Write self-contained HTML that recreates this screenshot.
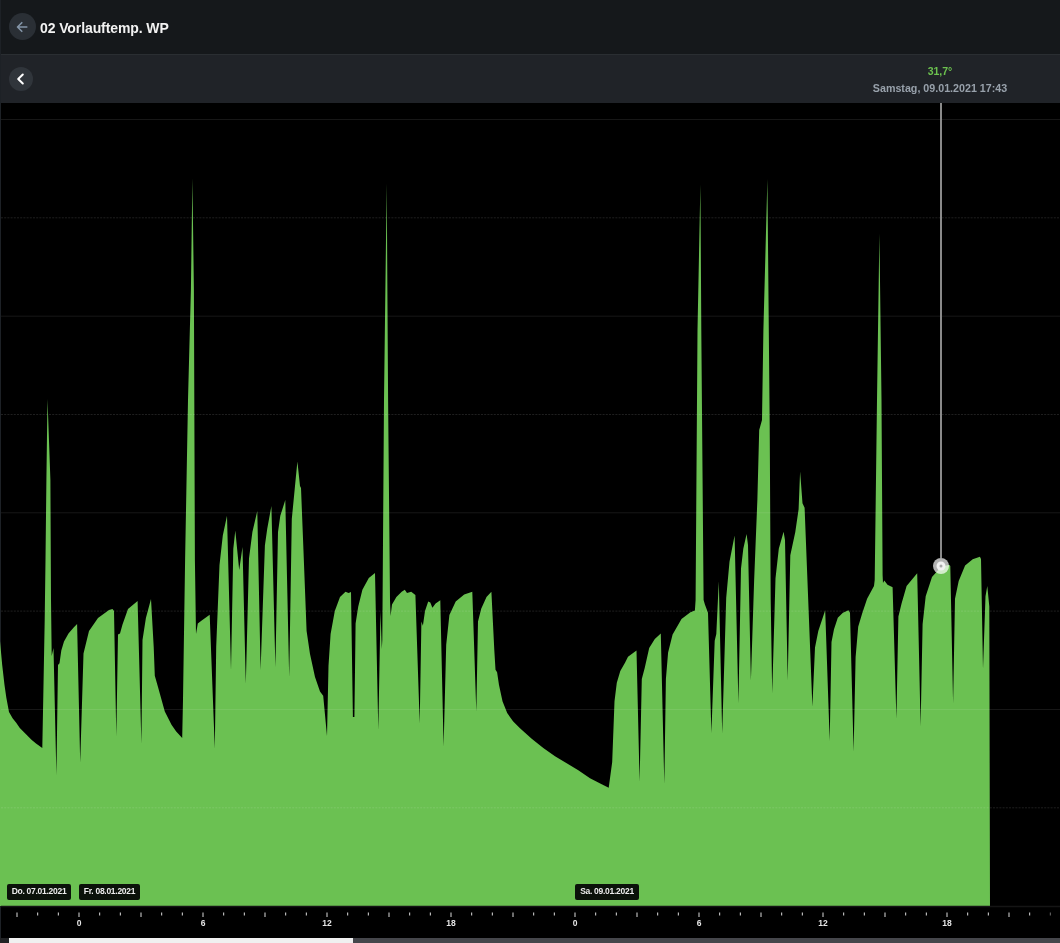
<!DOCTYPE html>
<html><head><meta charset="utf-8"><style>
html,body{margin:0;padding:0;width:1060px;height:943px;overflow:hidden;background:#000;font-family:"Liberation Sans",sans-serif;}
.abs{position:absolute;}
#title,#val,#date,.dl,svg text{will-change:transform;}
#hdr{left:0;top:0;width:1060px;height:54px;background:#15181b;}
#bar{left:0;top:54px;width:1060px;height:48px;background:#202328;border-top:1px solid #2a2e32;}
#lb{left:0;top:0;width:1px;height:943px;background:#1d2126;}
#back{left:9px;top:13px;width:27px;height:27px;border-radius:50%;background:#2a2f35;}
#title{left:40px;top:20px;font-size:14px;font-weight:bold;color:#f2f2f2;white-space:nowrap;letter-spacing:-0.1px;}
#prev{left:9px;top:67px;width:24px;height:24px;border-radius:50%;background:#30353b;}
#val{left:840px;top:64.5px;width:200px;text-align:center;font-size:10.5px;font-weight:bold;color:#6cc24f;}
#date{left:840px;top:82.3px;width:200px;text-align:center;font-size:10.7px;font-weight:bold;color:#98a1ab;}
.dl{top:884px;height:15.5px;background:#0b120a;border-radius:2px;color:#ececec;font-size:8.5px;font-weight:bold;line-height:15.5px;letter-spacing:-0.28px;text-align:center;white-space:nowrap;}
#sbt{left:0;top:938px;width:1060px;height:5px;background:#45464b;}
#sbl{left:0;top:938px;width:9px;height:5px;background:#222325;}
#sbh{left:9px;top:938px;width:344px;height:5px;background:#f0f0f0;}
</style></head><body>
<div id="hdr" class="abs"></div>
<div id="bar" class="abs"></div>
<div id="lb" class="abs"></div>
<svg class="abs" style="left:0;top:0" width="1060" height="943" viewBox="0 0 1060 943">
<rect x="1" y="103" width="1059" height="835" fill="#000"/>
<path d="M0 641 L2.2 665 L4.5 685 L6.3 697.5 L9 712 L12.6 718.2 L16.2 722.7 L19.8 728 L27 735.3 L31.5 739.8 L36 743.4 L42.3 748 L43.2 701 L44.7 620 L45.5 560 L46.4 480 L47.5 399 L50.4 480 L51 600 L51.7 656 L53.5 648 L56.4 775 L58 665 L59.5 663.2 L61.3 650.6 L64 641.6 L68.5 633.5 L73.9 627.2 L77.1 624 L80.2 762.6 L83.5 653.5 L89 631 L98 618 L109 610 L112.5 609 L114 611 L116.3 736 L118 634.6 L120 633.5 L122.5 624.5 L128 609 L137.6 601 L141.4 743.7 L142.5 640 L145.9 618 L151 599 L153.7 646.8 L154.8 675.8 L158 687 L164.8 711.4 L171.5 724.8 L176.2 731.6 L182.2 738 L183 700 L185.1 560 L188 400 L190.9 290 L192.4 178.3 L193.9 290 L194.9 560 L196 634 L197.8 623.6 L201.7 620.4 L209.7 614.7 L214.8 748.6 L216.2 647 L219.5 565 L222.8 535.5 L227 515.8 L231 670 L233.3 548.7 L235.3 530.6 L239.2 570 L242.5 547 L245.8 683.6 L249 558.6 L252.4 532 L257.3 510.9 L260.6 670 L264.9 545.4 L267.2 529 L271.4 506 L275.4 667 L278 532 L280.3 515.8 L285.3 500 L289.2 677 L291.8 519 L295 486 L297.4 461.5 L300 486 L301 488 L303.4 548.7 L306.6 631 L310 654 L315 677 L320 691.5 L323.2 695.7 L327 736 L328.5 666 L330.6 634 L334.8 611 L340 597 L345.5 591.8 L348.6 592.9 L351 592 L352.9 717 L354.4 717 L355.6 623.6 L358.2 606.7 L362.4 589.7 L368.8 578 L375 573 L378.3 729.7 L380.5 611 L381.8 649 L382.3 640 L384 400 L386.7 183.4 L388.1 400 L390 600 L390.6 616 L392 604.5 L396.4 597 L401.7 591.8 L404.8 589.7 L407 593 L411.2 591.8 L415.4 595 L419.7 723.3 L421.4 621.5 L422.9 625.7 L425 611 L428.2 601.4 L430.3 602.4 L432.4 607.7 L435.6 603.5 L440.3 600.3 L443.6 746.6 L446.2 644.8 L449.4 615 L455.7 601.4 L464.2 594.4 L472.3 591.8 L476.3 711.6 L478 621.5 L481.2 608.8 L486.5 597 L491.4 591.8 L494.3 650 L495.5 669.8 L497.1 672.2 L499 685 L502.5 701.3 L507.2 713 L513 721.2 L520 728.2 L531.7 738.7 L543.3 748 L555 756.2 L566.7 763.2 L578.3 770.2 L590 778.3 L601.7 784.2 L608.7 787.7 L612.2 762 L613.8 720 L614.5 701.3 L616.8 682.7 L620.3 671 L625 662.8 L628 656.8 L636.5 650.6 L639.6 781.5 L641.8 679 L644.7 668 L649.2 648 L654.8 639 L660.8 633.4 L664.3 783.8 L665.9 679 L668.1 652.4 L672.6 634.5 L681.5 619 L690.4 612.3 L694.9 610.5 L695.6 600 L697.5 330 L700.4 184.6 L701.3 330 L703.6 600 L704.9 604.5 L708 612.8 L711.4 733 L714.7 640.8 L716.3 634 L718.8 581.3 L722.2 733 L726.2 598 L729.5 561.8 L734.6 535.5 L738.4 703.3 L741 568.4 L743.3 548.7 L746.6 534 L748 545 L750.9 680.3 L754.1 581.6 L757.4 499 L759.2 430 L762 420 L763.4 330 L767.4 179 L768.8 330 L769.7 425 L770.7 600 L772.2 693.4 L775.5 578.3 L778.8 548.7 L783.6 531.8 L785 540 L787.7 680.3 L790.3 555.3 L795.3 532 L798.6 509.2 L800.1 471.4 L802.5 503.3 L804.6 507.8 L812.4 706.6 L815 647.4 L818.3 631 L825.2 610.2 L829.7 741 L831.5 642 L834 629.3 L837.8 617.8 L842.9 612.7 L848.5 610.2 L850 612.7 L853.6 751.5 L855.6 657.3 L858.2 626.7 L862 614 L867.1 598.7 L874 586 L874.7 580 L877 400 L879.4 233.4 L881.5 400 L882.6 575 L883 583 L884.3 580.5 L887.5 584.7 L892.6 587.3 L896.4 718.4 L898.4 616.6 L901.5 603.8 L906.6 586 L917.2 573.3 L920.6 726 L922.6 624.2 L925.7 596.2 L932 577 L940.9 567 L949.3 564.8 L950.3 566 L953.1 703.1 L955 598.7 L958.7 581 L965.1 565.6 L972.7 559.3 L979.9 556.7 L981 559 L983 668.7 L985.5 596.2 L987.3 586 L989.3 606.4 L990 906 L0 906 Z" fill="#6bc152"/>
<line x1="1" y1="119.5" x2="1060" y2="119.5" stroke="rgba(255,255,255,0.09)" stroke-width="1"/><line x1="1" y1="217.8" x2="1060" y2="217.8" stroke="rgba(255,255,255,0.12)" stroke-width="1" stroke-dasharray="2 1.2"/><line x1="1" y1="316.2" x2="1060" y2="316.2" stroke="rgba(255,255,255,0.09)" stroke-width="1"/><line x1="1" y1="414.5" x2="1060" y2="414.5" stroke="rgba(255,255,255,0.12)" stroke-width="1" stroke-dasharray="2 1.2"/><line x1="1" y1="512.8" x2="1060" y2="512.8" stroke="rgba(255,255,255,0.09)" stroke-width="1"/><line x1="1" y1="611.1" x2="1060" y2="611.1" stroke="rgba(255,255,255,0.12)" stroke-width="1" stroke-dasharray="2 1.2"/><line x1="1" y1="709.5" x2="1060" y2="709.5" stroke="rgba(255,255,255,0.09)" stroke-width="1"/><line x1="1" y1="807.8" x2="1060" y2="807.8" stroke="rgba(255,255,255,0.12)" stroke-width="1" stroke-dasharray="2 1.2"/>
<line x1="1" y1="906.5" x2="1060" y2="906.5" stroke="#151515" stroke-width="1.5"/>
<rect x="16.50" y="912.5" width="1" height="4.5" fill="rgba(220,220,220,1.0)"/><rect x="37.17" y="912.5" width="1" height="3" fill="rgba(220,220,220,1.0)"/><rect x="57.83" y="912.5" width="1" height="3" fill="rgba(220,220,220,1.0)"/><rect x="78.50" y="912.5" width="1" height="4.5" fill="rgba(220,220,220,1.0)"/><rect x="99.17" y="912.5" width="1" height="3" fill="rgba(220,220,220,1.0)"/><rect x="119.83" y="912.5" width="1" height="3" fill="rgba(220,220,220,1.0)"/><rect x="140.50" y="912.5" width="1" height="4.5" fill="rgba(220,220,220,1.0)"/><rect x="161.17" y="912.5" width="1" height="3" fill="rgba(220,220,220,1.0)"/><rect x="181.83" y="912.5" width="1" height="3" fill="rgba(220,220,220,1.0)"/><rect x="202.50" y="912.5" width="1" height="4.5" fill="rgba(220,220,220,1.0)"/><rect x="223.17" y="912.5" width="1" height="3" fill="rgba(220,220,220,1.0)"/><rect x="243.83" y="912.5" width="1" height="3" fill="rgba(220,220,220,1.0)"/><rect x="264.50" y="912.5" width="1" height="4.5" fill="rgba(220,220,220,1.0)"/><rect x="285.17" y="912.5" width="1" height="3" fill="rgba(220,220,220,1.0)"/><rect x="305.83" y="912.5" width="1" height="3" fill="rgba(220,220,220,1.0)"/><rect x="326.50" y="912.5" width="1" height="4.5" fill="rgba(220,220,220,1.0)"/><rect x="347.17" y="912.5" width="1" height="3" fill="rgba(220,220,220,1.0)"/><rect x="367.83" y="912.5" width="1" height="3" fill="rgba(220,220,220,1.0)"/><rect x="388.50" y="912.5" width="1" height="4.5" fill="rgba(220,220,220,1.0)"/><rect x="409.17" y="912.5" width="1" height="3" fill="rgba(220,220,220,1.0)"/><rect x="429.83" y="912.5" width="1" height="3" fill="rgba(220,220,220,1.0)"/><rect x="450.50" y="912.5" width="1" height="4.5" fill="rgba(220,220,220,1.0)"/><rect x="471.17" y="912.5" width="1" height="3" fill="rgba(220,220,220,1.0)"/><rect x="491.83" y="912.5" width="1" height="3" fill="rgba(220,220,220,1.0)"/><rect x="512.50" y="912.5" width="1" height="4.5" fill="rgba(220,220,220,1.0)"/><rect x="533.17" y="912.5" width="1" height="3" fill="rgba(220,220,220,1.0)"/><rect x="553.83" y="912.5" width="1" height="3" fill="rgba(220,220,220,1.0)"/><rect x="574.50" y="912.5" width="1" height="4.5" fill="rgba(220,220,220,1.0)"/><rect x="595.17" y="912.5" width="1" height="3" fill="rgba(220,220,220,1.0)"/><rect x="615.83" y="912.5" width="1" height="3" fill="rgba(220,220,220,1.0)"/><rect x="636.50" y="912.5" width="1" height="4.5" fill="rgba(220,220,220,1.0)"/><rect x="657.17" y="912.5" width="1" height="3" fill="rgba(220,220,220,1.0)"/><rect x="677.83" y="912.5" width="1" height="3" fill="rgba(220,220,220,1.0)"/><rect x="698.50" y="912.5" width="1" height="4.5" fill="rgba(220,220,220,1.0)"/><rect x="719.17" y="912.5" width="1" height="3" fill="rgba(220,220,220,1.0)"/><rect x="739.83" y="912.5" width="1" height="3" fill="rgba(220,220,220,1.0)"/><rect x="760.50" y="912.5" width="1" height="4.5" fill="rgba(220,220,220,1.0)"/><rect x="781.17" y="912.5" width="1" height="3" fill="rgba(220,220,220,1.0)"/><rect x="801.83" y="912.5" width="1" height="3" fill="rgba(220,220,220,1.0)"/><rect x="822.50" y="912.5" width="1" height="4.5" fill="rgba(220,220,220,1.0)"/><rect x="843.17" y="912.5" width="1" height="3" fill="rgba(220,220,220,1.0)"/><rect x="863.83" y="912.5" width="1" height="3" fill="rgba(220,220,220,1.0)"/><rect x="884.50" y="912.5" width="1" height="4.5" fill="rgba(220,220,220,1.0)"/><rect x="905.17" y="912.5" width="1" height="3" fill="rgba(220,220,220,1.0)"/><rect x="925.83" y="912.5" width="1" height="3" fill="rgba(220,220,220,1.0)"/><rect x="946.50" y="912.5" width="1" height="4.5" fill="rgba(220,220,220,1.0)"/><rect x="967.17" y="912.5" width="1" height="3" fill="rgba(220,220,220,1.0)"/><rect x="987.83" y="912.5" width="1" height="3" fill="rgba(220,220,220,1.0)"/><rect x="1008.50" y="912.5" width="1" height="4.5" fill="rgba(220,220,220,1.0)"/><rect x="1029.17" y="912.5" width="1" height="3" fill="rgba(220,220,220,1.0)"/><rect x="1049.83" y="912.5" width="1" height="3" fill="rgba(220,220,220,0.5)"/>
<g fill="#e6e6e6" font-family="Liberation Sans" font-size="8.5" font-weight="bold"><text x="79.00" y="926" text-anchor="middle">0</text><text x="203.00" y="926" text-anchor="middle">6</text><text x="327.00" y="926" text-anchor="middle">12</text><text x="451.00" y="926" text-anchor="middle">18</text><text x="575.00" y="926" text-anchor="middle">0</text><text x="699.00" y="926" text-anchor="middle">6</text><text x="823.00" y="926" text-anchor="middle">12</text><text x="947.00" y="926" text-anchor="middle">18</text></g>
<line x1="941" y1="103" x2="941" y2="558" stroke="#8a8a8a" stroke-width="2"/>
<circle cx="941" cy="566" r="8" fill="rgba(255,255,255,0.7)"/>
<circle cx="941" cy="566" r="4.5" fill="#f2f2f2"/>
<circle cx="941" cy="566" r="1.5" fill="#a8a8a8"/>
</svg>
<div id="back" class="abs"><svg width="27" height="27" viewBox="0 0 27 27"><path d="M17.8 14 H9 M12.8 9.7 L8.5 14 L12.8 18.3" stroke="#8495a8" stroke-width="1.6" fill="none" stroke-linecap="round" stroke-linejoin="round"/></svg></div>
<div id="title" class="abs">02 Vorlauftemp. WP</div>
<div id="prev" class="abs"><svg width="24" height="24" viewBox="0 0 24 24"><path d="M13.8 7.5 L9.2 12 L13.8 16.5" stroke="#ffffff" stroke-width="2" fill="none" stroke-linecap="round" stroke-linejoin="round"/></svg></div>
<div id="val" class="abs">31,7°</div>
<div id="date" class="abs">Samstag, 09.01.2021 17:43</div>
<div class="abs dl" style="left:7px;width:64px;">Do. 07.01.2021</div>
<div class="abs dl" style="left:79px;width:61px;">Fr. 08.01.2021</div>
<div class="abs dl" style="left:575px;width:64px;">Sa. 09.01.2021</div>
<div id="sbt" class="abs"></div>
<div id="sbl" class="abs"></div>
<div id="sbh" class="abs"></div>
</body></html>
